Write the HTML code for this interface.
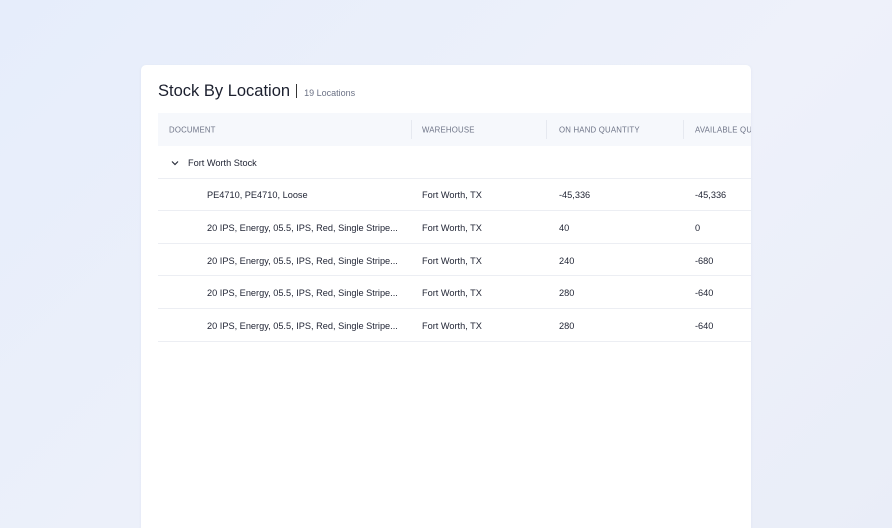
<!DOCTYPE html>
<html><head><style>
*{margin:0;padding:0;box-sizing:border-box}
html,body{width:892px;height:528px;overflow:hidden}
body{background:linear-gradient(135deg,#e6edfb 0%,#eef1fa 60%,#e9edf8 100%);font-family:"Liberation Sans",sans-serif;position:relative}
.card{position:absolute;left:141px;top:65px;width:610px;height:463px;background:#fff;border-radius:5px 5px 0 0;overflow:hidden;box-shadow:0 1px 3px rgba(100,120,170,.08)}
.title{position:absolute;left:17px;top:17px;font-size:16.5px;color:#1b1f2e;white-space:nowrap}
.title .sep{display:inline-block;width:1px;height:14px;background:#333;margin:0 7px 0 6px;vertical-align:-2px}
.title small{font-size:9px;color:#6b7185}
.tbl{position:absolute;left:17px;top:48px;width:620px}
.row{position:relative;height:32.6px;border-bottom:1px solid #eceef3;font-size:9.2px;color:#1f2333}
.row span{position:absolute;top:50%;transform:translateY(-40%);white-space:nowrap}
.hd{background:#f6f8fc;border-bottom:none;font-size:7.8px;color:#6e7487;letter-spacing:.2px;height:33px}
.hd span{transform:translateY(-50%)}
.hd i{position:absolute;top:7px;width:1px;height:19px;background:#e6e9f0}
svg{position:absolute}
</style></head><body>
<div class="card">
<div class="title">Stock By Location<span class="sep"></span><small>19 Locations</small></div>
<div class="tbl">
<div class="row hd"><span style="left:11px">DOCUMENT</span><i style="left:253px"></i><span style="left:264px">WAREHOUSE</span><i style="left:388px"></i><span style="left:401px">ON HAND QUANTITY</span><i style="left:525px"></i><span style="left:537px">AVAILABLE QUANTITY</span></div>
<div class="row"><svg style="left:13px;top:14px" width="8" height="6" viewBox="0 0 8 6"><path d="M1 1.5L4 4.5L7 1.5" fill="none" stroke="#2a2e3c" stroke-width="1.2"/></svg><span style="left:30px">Fort Worth Stock</span></div>
<div class="row"><span style="left:49px">PE4710, PE4710, Loose</span><span style="left:264px">Fort Worth, TX</span><span style="left:401px">-45,336</span><span style="left:537px">-45,336</span></div>
<div class="row"><span style="left:49px">20 IPS, Energy, 05.5, IPS, Red, Single Stripe...</span><span style="left:264px">Fort Worth, TX</span><span style="left:401px">40</span><span style="left:537px">0</span></div>
<div class="row"><span style="left:49px">20 IPS, Energy, 05.5, IPS, Red, Single Stripe...</span><span style="left:264px">Fort Worth, TX</span><span style="left:401px">240</span><span style="left:537px">-680</span></div>
<div class="row"><span style="left:49px">20 IPS, Energy, 05.5, IPS, Red, Single Stripe...</span><span style="left:264px">Fort Worth, TX</span><span style="left:401px">280</span><span style="left:537px">-640</span></div>
<div class="row"><span style="left:49px">20 IPS, Energy, 05.5, IPS, Red, Single Stripe...</span><span style="left:264px">Fort Worth, TX</span><span style="left:401px">280</span><span style="left:537px">-640</span></div>
</div>
</div>
</body></html>
